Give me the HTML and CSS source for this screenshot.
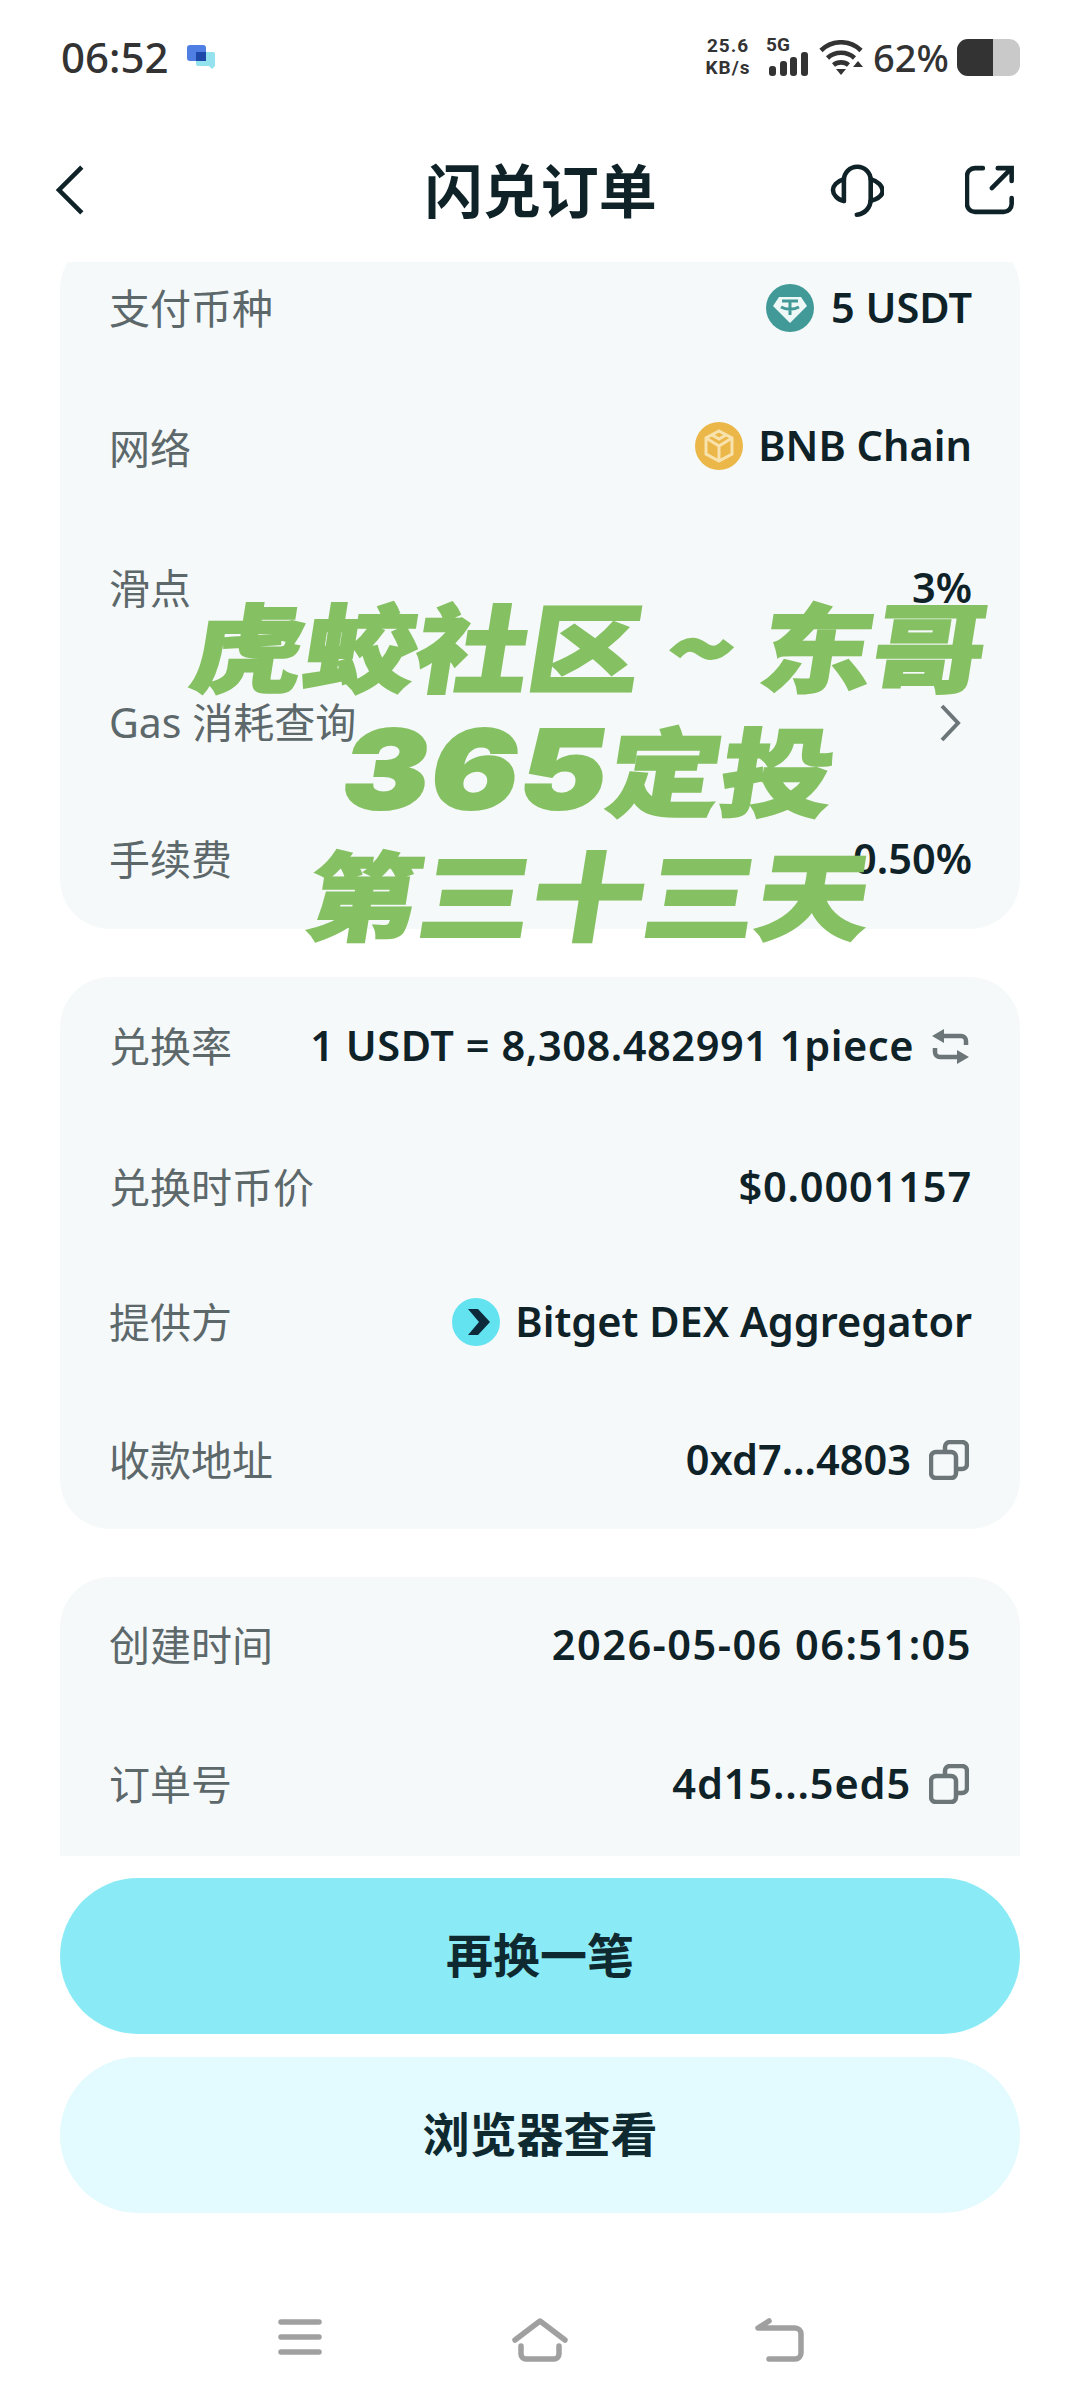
FILE: index.html
```html
<!DOCTYPE html>
<html lang="zh-CN">
<head>
<meta charset="utf-8">
<title>闪兑订单</title>
<link rel="stylesheet" href="styles.css">
</head>
<body>
<div class="page">
  <div class="status">
    <div class="status-left">
      <span class="time">06:52</span>
      <svg class="chat" viewBox="0 0 28 24"><rect x="0" y="0" width="19" height="16" rx="3" fill="#4f7fe2"/><path d="M9 7h17a2 2 0 0 1 2 2v12l-3 3-3-3H11a2 2 0 0 1-2-2z" fill="#93e2ee"/><rect x="9" y="7" width="10" height="9" fill="#1f49a8"/></svg>
    </div>
    <div class="status-right">
      <div class="speed"><span>25.6</span><span>KB/s</span></div>
      <div class="net">
        <span class="net-label">5G</span>
        <svg class="signal" viewBox="0 0 39 24"><rect x="0" y="14" width="7" height="10" rx="3" fill="#333"/><rect x="11" y="9" width="7" height="15" rx="3" fill="#333"/><rect x="21" y="5" width="7" height="19" rx="3" fill="#333"/><rect x="32" y="0" width="7" height="24" rx="3" fill="#333"/></svg>
      </div>
      <svg class="wifi" viewBox="0 0 44 35"><g fill="none" stroke="#333" stroke-width="4.6"><path d="M2 10.500C13-.5 31-.5 42 10.500"/><path d="M8.500 18C16 11 28 11 35.500 18"/><path d="M14.500 25c4-3.500 11-3.500 15 0"/></g><path d="M17 29h10l-5 6z" fill="#333"/><path d="M39 21l5 6h-10z" fill="#333"/></svg>
      <span class="pct">62%</span>
      <div class="battery"><span class="battery-fill"></span></div>
    </div>
  </div>

  <header class="header">
    <svg class="back" viewBox="0 0 32 52"><path d="M28 3 5 26l23 23"/></svg>
    <h1 class="title">闪兑订单</h1>
    <svg class="headset" viewBox="0 0 55 55"><path d="M14 38V17a13.500 13.500 0 0 1 27 0v19c0 9-6 15-14 16"/><path d="M14 16C7 18 3 23 3 27s4 10 11 11"/><path d="M41 16c7 2 12 7 12 12s-5 8-12 10"/></svg>
    <svg class="share" viewBox="0 0 50 50"><path d="M18 3h-8a8 8 0 0 0-8 8v28a8 8 0 0 0 8 8h29a8 8 0 0 0 8-8v-6"/><path d="M27 23 46 4M33 3h14v13"/></svg>
  </header>

  <main class="scroll">
    <section class="card card-first">
      <div class="row h138"><span class="label">支付币种</span><span class="value gap-wide">
        <svg class="coin" viewBox="0 0 48 48"><circle cx="24" cy="24" r="24" fill="#429a98"/><path d="M13 13h22l6 9-17 17L7 22z" fill="#eef8f7"/><path d="M16 17h16M24 17v14M15 23c5 3 13 3 18 0" fill="none" stroke="#429a98" stroke-width="3"/></svg>
        5 USDT</span></div>
      <div class="row h143"><span class="label">网络</span><span class="value lift">
        <svg class="coin" viewBox="0 0 48 48"><circle cx="24" cy="24" r="24" fill="#ebb749"/><path d="M24 9l13 7v16l-13 7-13-7V16z" fill="none" stroke="#f8e2ad" stroke-width="3"/><path d="M11 16l13 8 13-8M24 24v15M17 13l7 4 7-4" fill="none" stroke="#f8e2ad" stroke-width="3"/></svg>
        BNB Chain</span></div>
      <div class="row h136"><span class="label">滑点</span><span class="value">3%</span></div>
      <div class="row h133"><span class="label">Gas 消耗查询</span>
        <svg class="more" viewBox="0 0 22 38"><path d="M3 2l16 17L3 36"/></svg></div>
      <div class="row h140"><span class="label">手续费</span><span class="value">0.50%</span></div>
    </section>

    <section class="card">
      <div class="row h138"><span class="label">兑换率</span><span class="value gap-tool rate">1 USDT = 8,308.482991 1piece
        <svg class="tool swap" viewBox="0 0 37 35"><path d="M12 7h17a5 5 0 0 1 5 5v4M25 28H8a5 5 0 0 1-5-5v-4"/><path class="solid" d="M12 0v14L0 7zM25 21v14l12-7z"/></svg></span></div>
      <div class="row h144"><span class="label">兑换时币价</span><span class="value num">$0.0001157</span></div>
      <div class="row h126"><span class="label">提供方</span><span class="value">
        <svg class="coin" viewBox="0 0 48 48"><circle cx="24" cy="24" r="24" fill="#63e2f0"/><path d="M16 11h10l12 13-12 13H16l11-13z" fill="#0d2a3a"/></svg>
        Bitget DEX Aggregator</span></div>
      <div class="row h144 row-last"><span class="label">收款地址</span><span class="value gap-tool">0xd7...4803
        <svg class="tool copy" viewBox="0 0 40 40"><path d="M16 10V7a5 5 0 0 1 5-5h12a5 5 0 0 1 5 5v17a5 5 0 0 1-5 5h-4"/><rect x="2" y="12" width="25" height="26" rx="5"/></svg></span></div>
    </section>

    <section class="card">
      <div class="row h136"><span class="label">创建时间</span><span class="value date">2026-05-06 06:51:05</span></div>
      <div class="row h142"><span class="label">订单号</span><span class="value gap-tool num">4d15...5ed5
        <svg class="tool copy" viewBox="0 0 40 40"><path d="M16 10V7a5 5 0 0 1 5-5h12a5 5 0 0 1 5 5v17a5 5 0 0 1-5 5h-4"/><rect x="2" y="12" width="25" height="26" rx="5"/></svg></span></div>
      <div class="row h138"></div>
    </section>
  </main>

  <div class="actions">
    <button class="btn btn-primary">再换一笔</button>
    <button class="btn btn-secondary">浏览器查看</button>
  </div>

  <nav class="navbar">
    <svg class="nav-icon" viewBox="0 0 56 44"><path d="M9 4h38M9 19h38M9 34h38"/></svg>
    <svg class="nav-icon" viewBox="0 0 56 44"><path d="M3 22 28 3l25 19M9 28v8a5 5 0 0 0 5 5h28a5 5 0 0 0 5-5v-8"/></svg>
    <svg class="nav-icon" viewBox="0 0 56 44"><path d="M17 3 6 10h37a6 6 0 0 1 6 6v19a6 6 0 0 1-6 6H17"/></svg>
  </nav>

  <div class="watermark">
    <div class="wm-line">虎蛟社区 ~ 东哥</div>
    <div class="wm-line"><span class="wm-num">365</span>定投</div>
    <div class="wm-line">第三十三天</div>
  </div>
</div>
</body>
</html>
```

FILE: styles.css
```css
* { box-sizing: border-box; }
html, body { margin: 0; padding: 0; background: #fff; }
body { font-family: "Noto Sans", "Noto Sans CJK SC", sans-serif; color: #0e2228; }
.page { position: relative; width: 1080px; height: 2400px; display: flex; flex-direction: column; overflow: hidden; }

.status { height: 114px; padding: 0 60px 0 61px; display: flex; align-items: center; justify-content: space-between; color: #333; flex: none; }
.status-left { display: flex; align-items: center; gap: 18px; }
.time { font-size: 42px; font-weight: 500; line-height: 1; }
.chat { width: 28px; height: 24px; }
.status-right { display: flex; align-items: center; }
.speed { display: flex; flex-direction: column; align-items: center; font: 700 19px/22px Roboto, sans-serif; letter-spacing: 1px; width: 46px; }
.net { display: flex; flex-direction: column; margin-left: 18px; width: 39px; }
.net-label { font: 700 19px/14px Roboto, sans-serif; margin-left: -3px; }
.signal { width: 39px; height: 24px; display: block; }
.wifi { width: 44px; height: 35px; margin-left: 11px; }
.pct { font-size: 38px; font-weight: 500; line-height: 1; margin-left: 10px; width: 76px; }
.battery { width: 63px; height: 37px; margin-left: 8px; background: #c9c9c9; border-radius: 11px; overflow: hidden; }
.battery-fill { display: block; width: 36px; height: 100%; background: #333; }

.header { height: 148px; flex: none; padding: 0 65px 0 54px; display: flex; align-items: center; position: relative; }
.back { width: 32px; height: 52px; fill: none; stroke: #0e2228; stroke-width: 4.6; margin-top: 4px; }
.title { margin: 0 0 0 339px; font: 700 58px/1 "Noto Sans CJK SC", sans-serif; width: 232px; white-space: nowrap; }
.headset { width: 55px; height: 55px; margin-left: 173px; fill: none; stroke: #0e2228; stroke-width: 4.6; stroke-linecap: round; margin-top: 4px; }
.share { width: 50px; height: 50px; margin-left: 81px; fill: none; stroke: #0e2228; stroke-width: 4.6; stroke-linecap: round; margin-top: 4px; }

.scroll { height: 1594px; flex: none; padding: 0 60px; overflow: hidden; display: flex; flex-direction: column; gap: 48px; }
.card { flex: none; background: #f5f9fa; border-radius: 50px; padding: 0 48px 0 49px; }
.card-first { margin-top: -23px; }

.row { display: flex; align-items: center; justify-content: space-between; }
.h126 { height: 126px; } .h133 { height: 133px; } .h136 { height: 136px; } .h138 { height: 138px; }
.h140 { height: 140px; } .h142 { height: 142px; } .h143 { height: 143px; } .h144 { height: 144px; }
.row-last { padding-top: 6px; }
.label { font: 400 41px/1 "Noto Sans", "Noto Sans CJK SC", sans-serif; color: #5d686b; }
.value { display: flex; align-items: center; gap: 15px; font-size: 41.5px; font-weight: 600; line-height: 1; white-space: nowrap; color: #0e2228; }
.num { letter-spacing: 0.85px; }
.date { letter-spacing: 1.45px; }
.rate { letter-spacing: 0.55px; }
.lift { margin-top: -6px; }
.gap-wide { gap: 17px; }
.gap-tool { gap: 18px; }
.coin { width: 48px; height: 48px; }
.more { width: 22px; height: 38px; fill: none; stroke: #6c7678; stroke-width: 4; margin-right: 11px; }
.tool { fill: none; stroke: #6c7678; stroke-width: 4.500; flex: none; margin-right: 3px; }
.swap { width: 37px; height: 35px; }
.copy { width: 40px; height: 40px; }
.solid { fill: #6c7678; stroke: none; }

.actions { flex: none; padding: 22px 60px 0; display: flex; flex-direction: column; gap: 23px; }
.btn { height: 156px; border: 0; border-radius: 78px; padding: 0 0 8px; color: #0e2a30; font: 700 47px/1 "Noto Sans CJK SC", sans-serif; }
.btn-primary { background: #8aebf6; }
.btn-secondary { background: #e3fbfe; }

.navbar { flex: none; padding: 105px 180px 0; display: grid; grid-template-columns: repeat(3, 240px); justify-items: center; }
.nav-icon { width: 56px; height: 44px; fill: none; stroke: #a0a0a0; stroke-width: 5.500; stroke-linecap: round; stroke-linejoin: round; }

.watermark { position: absolute; left: 0; top: 582px; width: 1180px; display: flex; flex-direction: column; align-items: center; color: #85c162; font: 900 96px/124px "Noto Sans CJK SC", sans-serif; pointer-events: none; }
.wm-line { white-space: nowrap; transform: skewX(-9deg) scaleX(1.17); -webkit-text-stroke: 2px #85c162; }
.wm-num { font: 900 110px/1 Inter, sans-serif; letter-spacing: 2px; }
```
